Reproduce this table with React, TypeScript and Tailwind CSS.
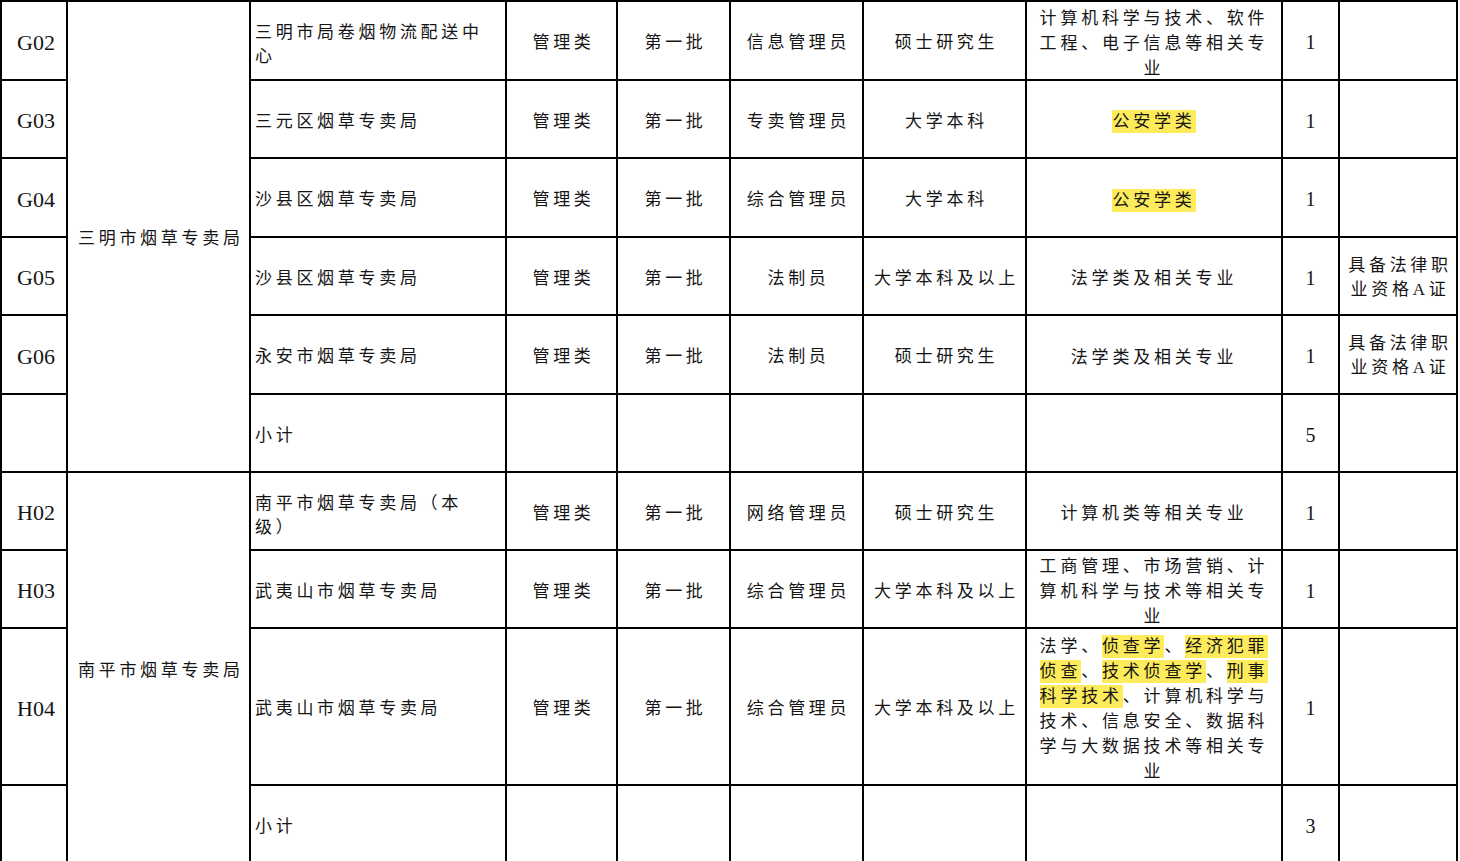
import React from "react";

const HL = ({ children }: { children: React.ReactNode }) => (
  <span className="bg-[#fdeb5b] py-[2px]">{children}</span>
);

type Row = {
  code: string;
  dept: React.ReactNode;
  cat?: string;
  batch?: string;
  post?: string;
  edu?: string;
  major?: React.ReactNode;
  num: string;
  note?: React.ReactNode;
};

const L = ({ children }: { children: React.ReactNode }) => <span className="block">{children}</span>;

const groupA: Row[] = [
  {
    code: "G02",
    dept: (
      <>
        <L>三明市局卷烟物流配送中</L>
        <L>心</L>
      </>
    ),
    cat: "管理类",
    batch: "第一批",
    post: "信息管理员",
    edu: "硕士研究生",
    major: (
      <>
        <L>计算机科学与技术、软件</L>
        <L>工程、电子信息等相关专</L>
        <L>业</L>
      </>
    ),
    num: "1",
  },
  {
    code: "G03",
    dept: "三元区烟草专卖局",
    cat: "管理类",
    batch: "第一批",
    post: "专卖管理员",
    edu: "大学本科",
    major: <HL>公安学类</HL>,
    num: "1",
  },
  {
    code: "G04",
    dept: "沙县区烟草专卖局",
    cat: "管理类",
    batch: "第一批",
    post: "综合管理员",
    edu: "大学本科",
    major: <HL>公安学类</HL>,
    num: "1",
  },
  {
    code: "G05",
    dept: "沙县区烟草专卖局",
    cat: "管理类",
    batch: "第一批",
    post: "法制员",
    edu: "大学本科及以上",
    major: "法学类及相关专业",
    num: "1",
    note: (
      <>
        <L>具备法律职</L>
        <L>业资格A证</L>
      </>
    ),
  },
  {
    code: "G06",
    dept: "永安市烟草专卖局",
    cat: "管理类",
    batch: "第一批",
    post: "法制员",
    edu: "硕士研究生",
    major: "法学类及相关专业",
    num: "1",
    note: (
      <>
        <L>具备法律职</L>
        <L>业资格A证</L>
      </>
    ),
  },
  { code: "", dept: "小计", num: "5" },
];

const groupB: Row[] = [
  {
    code: "H02",
    dept: (
      <>
        <L>南平市烟草专卖局（本</L>
        <L>级）</L>
      </>
    ),
    cat: "管理类",
    batch: "第一批",
    post: "网络管理员",
    edu: "硕士研究生",
    major: "计算机类等相关专业",
    num: "1",
  },
  {
    code: "H03",
    dept: "武夷山市烟草专卖局",
    cat: "管理类",
    batch: "第一批",
    post: "综合管理员",
    edu: "大学本科及以上",
    major: (
      <>
        <L>工商管理、市场营销、计</L>
        <L>算机科学与技术等相关专</L>
        <L>业</L>
      </>
    ),
    num: "1",
  },
  {
    code: "H04",
    dept: "武夷山市烟草专卖局",
    cat: "管理类",
    batch: "第一批",
    post: "综合管理员",
    edu: "大学本科及以上",
    major: (
      <>
        <L>
          法学、<HL>侦查学</HL>、<HL>经济犯罪</HL>
        </L>
        <L>
          <HL>侦查</HL>、<HL>技术侦查学</HL>、<HL>刑事</HL>
        </L>
        <L>
          <HL>科学技术</HL>、计算机科学与
        </L>
        <L>技术、信息安全、数据科</L>
        <L>学与大数据技术等相关专</L>
        <L>业</L>
      </>
    ),
    num: "1",
  },
  { code: "", dept: "小计", num: "3" },
];

const cell = "bg-white flex items-center";
const center = `${cell} justify-center text-center`;
const cjk = "text-[17px] leading-[24px] tracking-[3.7px]";

function RowCells({ r }: { r: Row }) {
  return (
    <>
      <div className={`${center} pl-[6px] pr-[2px] pt-[5px] ${cjk}`}><div>{r.cat}</div></div>
      <div className={`${center} pl-[6px] pr-[2px] pt-[5px] ${cjk}`}><div>{r.batch}</div></div>
      <div className={`${center} pl-[4px] pt-[5px] ${cjk}`}><div>{r.post}</div></div>
      <div className={`${center} pl-[4px] pt-[5px] ${cjk}`}><div>{r.edu}</div></div>
      <div className={`${center} pt-[5px] text-[17px] leading-[25px] tracking-[3.8px]`}><div>{r.major}</div></div>
      <div className={`${center} pt-[3px] text-[20px]`}><div>{r.num}</div></div>
      <div className={`${center} pl-[4px] pt-[3px] ${cjk}`}><div>{r.note}</div></div>
    </>
  );
}

function Code({ c }: { c: string }) {
  return <div className={`${center} text-[22px] pt-[3px] pl-[4px]`}><div>{c}</div></div>;
}

function Dept({ d, multi }: { d: React.ReactNode; multi?: boolean }) {
  return (
    <div className={`${cell} justify-start pl-[4px] ${cjk} ${multi ? "pt-[9px]" : "pt-[5px]"}`}>
      <div>{d}</div>
    </div>
  );
}

export default function App() {
  return (
    <div className="w-[1460px] h-[861px] overflow-hidden bg-white">
      <div
        className="grid w-[1458px] bg-black p-[2px] gap-[2px] text-[#151515] grid-cols-[64px_181px_254px_109px_111px_131px_161px_254px_55px_116px] grid-rows-[77px_76px_77px_76px_77px_76px_76px_76px_155px_77px]"
        style={{ fontFamily: '"Liberation Serif", "Noto Sans CJK SC", serif' }}
      >
        {groupA.map((r, i) => (
          <React.Fragment key={r.code + i}>
            <Code c={r.code} />
            {i === 0 && (
              <div className={`${cell} row-span-6 pl-[10px] pt-[5px] ${cjk}`}>
                <div>三明市烟草专卖局</div>
              </div>
            )}
            <Dept d={r.dept} multi={i === 0} />
            <RowCells r={r} />
          </React.Fragment>
        ))}
        {groupB.map((r, i) => (
          <React.Fragment key={r.code + "b" + i}>
            <Code c={r.code} />
            {i === 0 && (
              <div className={`${cell} row-span-4 pl-[10px] pt-[5px] ${cjk}`}>
                <div>南平市烟草专卖局</div>
              </div>
            )}
            <Dept d={r.dept} multi={i === 0} />
            <RowCells r={r} />
          </React.Fragment>
        ))}
      </div>
    </div>
  );
}
